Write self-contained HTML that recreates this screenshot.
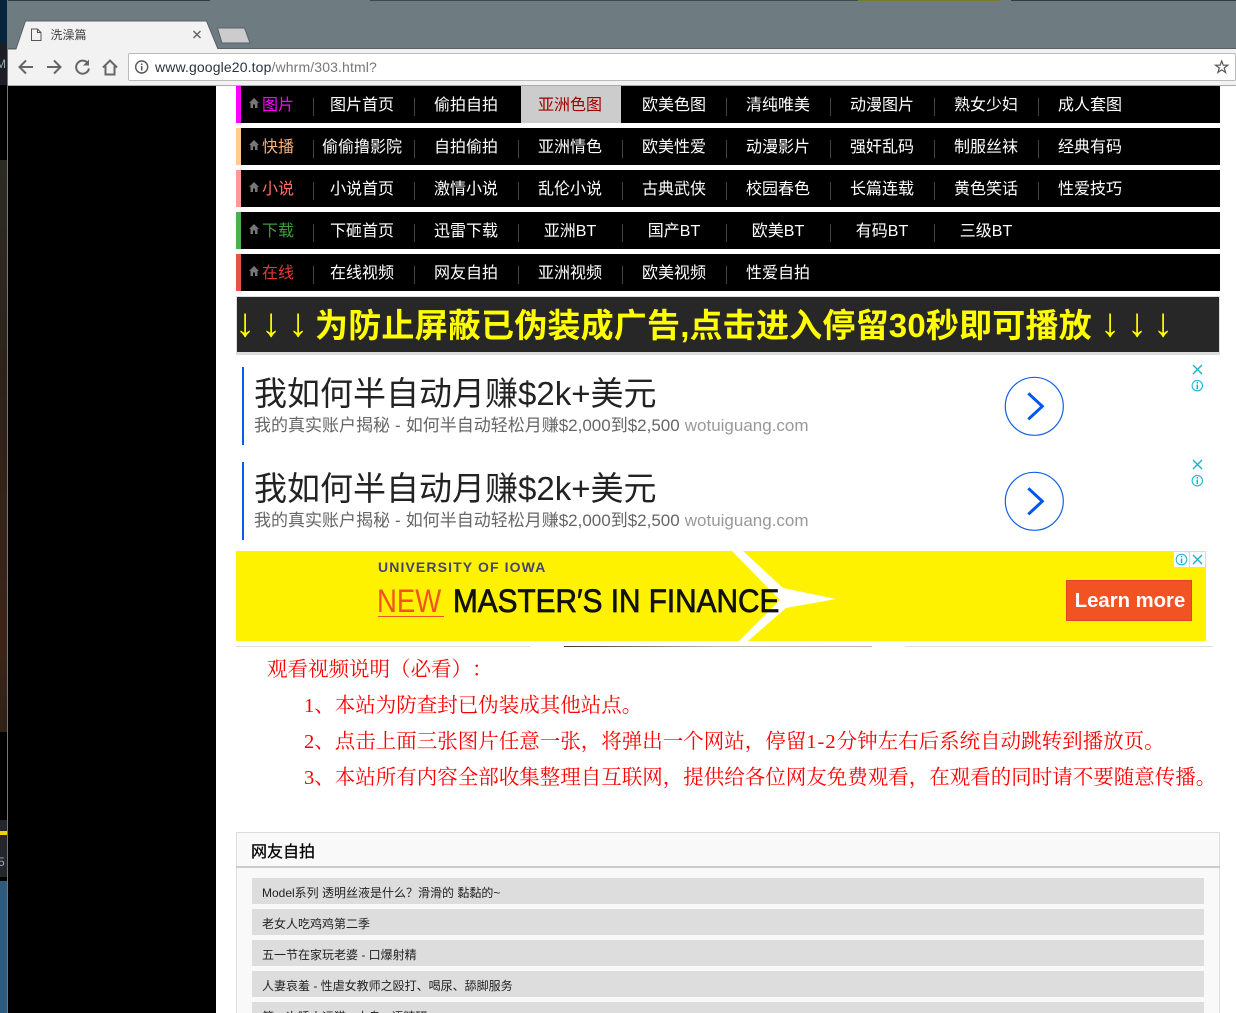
<!DOCTYPE html>
<html lang="zh"><head><meta charset="utf-8"><title>洗澡篇</title>
<style>
html{margin:0;padding:0;background:#fff;overflow:hidden;width:1236px;height:1013px}
body{margin:0;padding:0;background:#fff;position:relative;width:1236px;height:1013px;overflow:hidden;font-family:"Liberation Sans","Noto Sans CJK SC",sans-serif;text-spacing-trim:space-all}
.a,.r a,.r b,.r s,.r i,.r svg{position:absolute;white-space:nowrap;display:block;text-decoration:none}
.r{position:absolute;left:236px;width:984px;height:37px;background:#000}
.r i{left:0;top:0;width:5px;height:37px}
.r svg{left:13px;top:12px}
.r b{left:26px;top:0;font-weight:400;font-size:16px;line-height:39px}
.r a{top:0;width:104px;text-align:center;color:#fff;font-size:16px;line-height:39px}
.r s{top:12px;width:1px;height:18px;background:#444}
.it{position:absolute;left:252px;width:952px;height:26px;overflow:hidden;background:#ddd;color:#222;font-size:12px;line-height:31px;text-indent:10px;white-space:nowrap}
.red{position:absolute;white-space:nowrap;color:#f00;font-family:"Liberation Serif","Noto Serif CJK SC",serif;font-size:20.500px;line-height:30px;filter:blur(.25px)}
.ar{position:absolute;top:296px;width:26px;text-align:center;color:#ff0;font-size:40px;font-weight:700;line-height:55px;font-family:"Liberation Sans",sans-serif}
</style></head><body>

<!-- desktop strip -->
<div class="a" style="left:0;top:0;width:7px;height:43px;background:#06253f"></div>
<div class="a" style="left:0;top:43px;width:7px;height:42px;background:#1c1f26"></div>
<div class="a" style="left:0;top:85px;width:7px;height:75px;background:#000"></div>
<div class="a" style="left:0;top:160px;width:7px;height:572px;background:linear-gradient(#2c2a25,#2d2219 40%,#3b2417 85%,#2e2217)"></div>
<div class="a" style="left:0;top:732px;width:7px;height:88px;background:#000"></div>
<div class="a" style="left:0;top:820px;width:7px;height:61px;background:#25252c"></div>
<div class="a" style="left:0;top:831px;width:7px;height:4px;background:#f0d000"></div>
<div class="a" style="left:0;top:877px;width:7px;height:4px;background:#000"></div>
<div class="a" style="left:0;top:881px;width:7px;height:132px;background:#2e5a7e"></div>
<div class="a" style="left:-4px;top:57px;width:11px;overflow:hidden;color:#9ab;font-size:12px;line-height:14px">MI</div>
<div class="a" style="left:-2px;top:855px;width:9px;overflow:hidden;color:#9ab;font-size:12px;line-height:14px">5</div>
<div class="a" style="left:7px;top:0;width:1px;height:1013px;background:#777"></div>

<!-- page black side -->
<div class="a" style="left:8px;top:86px;width:208px;height:927px;background:#000"></div>

<!-- browser -->
<div class="a" style="left:8px;top:0;width:1228px;height:48px;background:#6e7c81"></div>
<div class="a" style="left:8px;top:0;width:202px;height:1px;background:#2c3c44"></div>
<div class="a" style="left:370px;top:0;width:488px;height:1px;background:#3a4a52"></div>
<div class="a" style="left:858px;top:0;width:142px;height:1px;background:#7a7a2a"></div>
<div class="a" style="left:1011px;top:0;width:225px;height:1px;background:#2c3c44"></div>
<div class="a" style="left:8px;top:48px;width:1228px;height:37px;background:#f2f2f2"></div>
<div class="a" style="left:8px;top:85px;width:1228px;height:1px;background:#aaa"></div>
<div class="a" style="left:8px;top:48px;width:1228px;height:1px;background:#566268"></div>
<svg class="a" style="left:8px;top:18px" width="244" height="32" viewBox="8 18 244 32">
<path d="M8 49H16L25.500 21H206.500L218 49" fill="#f2f2f2" stroke="#566268" stroke-width="1"/>
<rect x="17" y="48.500" width="200" height="1.500" fill="#f2f2f2"/>
<path d="M217.500 28H244.500L250 43H222Z" fill="#ccc" stroke="#566268" stroke-width="1"/>
<path d="M31.500 29H37.500L41 32.500V40.500H31.500Z M37.500 29V32.500H41" fill="none" stroke="#555" stroke-width="1"/>
<path d="M193.500 31L200.500 38M200.500 31L193.500 38" stroke="#666" stroke-width="1.500"/>
</svg>
<div class="a" style="left:50.500px;top:27px;font-size:12px;line-height:16px;color:#444">洗澡篇</div>
<svg class="a" style="left:16px;top:55px" width="106" height="24" viewBox="16 55 106 24" fill="none" stroke="#666" stroke-width="2">
<path d="M33 67H20M26 60.500L19.500 67L26 73.500"/>
<path d="M47 67H60M54 60.500L60.500 67L54 73.500"/>
<path d="M88 63.500A6.500 6.500 0 1 0 89 68.500" stroke-width="2"/><path d="M89 59.500V65.500H83Z" fill="#666" stroke="none"/>
<path d="M103 67.500L110 60.500L117 67.500M105.500 66V74.500H114.500V66" stroke-width="2"/>
</svg>
<div class="a" style="left:128px;top:53px;width:1106px;height:26px;background:#fff;border:1px solid #bbb;border-radius:2px"></div>
<svg class="a" style="left:134px;top:59px" width="16" height="16" viewBox="0 0 16 16"><circle cx="7.700" cy="8" r="6" fill="none" stroke="#555" stroke-width="1.400"/><path d="M7.700 7V11.500M7.700 4.500V6" stroke="#555" stroke-width="1.500"/></svg>
<div class="a" style="left:155px;top:59px;font-size:14px;line-height:16px;letter-spacing:.13px;color:#2a3340">www.google20.top<span style="color:#777">/whrm/303.html?</span></div>
<svg class="a" style="left:1214px;top:59px" width="16" height="16" viewBox="0 0 16 16"><path d="M7.700 2L9.300 6.200H13.800L10.200 9L11.600 13.500L7.700 10.800L3.900 13.500L5.300 9L1.600 6.200H6.100Z" fill="none" stroke="#555" stroke-width="1.200"/></svg>

<!-- nav rows -->
<div class="r" style="top:86px"><i style="background:#f0f"></i><svg width="10" height="10" viewBox="0 0 10 10"><path d="M5 0L10 5H8.500V10H6V6.500H4V10H1.500V5H0Z" fill="#777"/></svg><b style="color:#f0f">图片</b>
<div class="a" style="left:285px;top:0;width:100px;height:37px;background:#ccc"></div>
<s style="left:77px"></s><s style="left:178px"></s><s style="left:490px"></s><s style="left:594px"></s><s style="left:698px"></s><s style="left:802px"></s>
<a style="left:74px">图片首页</a><a style="left:178px">偷拍自拍</a><a style="left:282px;color:#a00000">亚洲色图</a><a style="left:386px">欧美色图</a><a style="left:490px">清纯唯美</a><a style="left:594px">动漫图片</a><a style="left:698px">熟女少妇</a><a style="left:802px">成人套图</a></div>

<div class="r" style="top:128px"><i style="background:#ffcc8f"></i><svg width="10" height="10" viewBox="0 0 10 10"><path d="M5 0L10 5H8.500V10H6V6.500H4V10H1.500V5H0Z" fill="#777"/></svg><b style="color:#f4b07a">快播</b>
<s style="left:77px"></s><s style="left:178px"></s><s style="left:282px"></s><s style="left:386px"></s><s style="left:490px"></s><s style="left:594px"></s><s style="left:698px"></s><s style="left:802px"></s>
<a style="left:74px">偷偷撸影院</a><a style="left:178px">自拍偷拍</a><a style="left:282px">亚洲情色</a><a style="left:386px">欧美性爱</a><a style="left:490px">动漫影片</a><a style="left:594px">强奸乱码</a><a style="left:698px">制服丝袜</a><a style="left:802px">经典有码</a></div>

<div class="r" style="top:170px"><i style="background:#ff9999"></i><svg width="10" height="10" viewBox="0 0 10 10"><path d="M5 0L10 5H8.500V10H6V6.500H4V10H1.500V5H0Z" fill="#777"/></svg><b style="color:#ff6f61">小说</b>
<s style="left:77px"></s><s style="left:178px"></s><s style="left:282px"></s><s style="left:386px"></s><s style="left:490px"></s><s style="left:594px"></s><s style="left:698px"></s><s style="left:802px"></s>
<a style="left:74px">小说首页</a><a style="left:178px">激情小说</a><a style="left:282px">乱伦小说</a><a style="left:386px">古典武侠</a><a style="left:490px">校园春色</a><a style="left:594px">长篇连载</a><a style="left:698px">黄色笑话</a><a style="left:802px">性爱技巧</a></div>

<div class="r" style="top:212px"><i style="background:#4caf50"></i><svg width="10" height="10" viewBox="0 0 10 10"><path d="M5 0L10 5H8.500V10H6V6.500H4V10H1.500V5H0Z" fill="#777"/></svg><b style="color:#3d9b40">下载</b>
<s style="left:77px"></s><s style="left:178px"></s><s style="left:282px"></s><s style="left:386px"></s><s style="left:490px"></s><s style="left:594px"></s><s style="left:698px"></s>
<a style="left:74px">下砸首页</a><a style="left:178px">迅雷下载</a><a style="left:282px">亚洲BT</a><a style="left:386px">国产BT</a><a style="left:490px">欧美BT</a><a style="left:594px">有码BT</a><a style="left:698px">三级BT</a></div>

<div class="r" style="top:254px"><i style="background:#e5534b"></i><svg width="10" height="10" viewBox="0 0 10 10"><path d="M5 0L10 5H8.500V10H6V6.500H4V10H1.500V5H0Z" fill="#777"/></svg><b style="color:#e53935">在线</b>
<s style="left:77px"></s><s style="left:178px"></s><s style="left:282px"></s><s style="left:386px"></s><s style="left:490px"></s>
<a style="left:74px">在线视频</a><a style="left:178px">网友自拍</a><a style="left:282px">亚洲视频</a><a style="left:386px">欧美视频</a><a style="left:490px">性爱自拍</a></div>

<!-- notice banner -->
<div class="a" style="left:236px;top:296px;width:982px;height:56px;background:#272727;border:1px solid #ddd;border-bottom:0"></div>
<div class="a" style="left:236px;top:352px;width:984px;height:3px;background:#ddd"></div>
<div class="ar" style="left:232px">↓</div><div class="ar" style="left:258px">↓</div><div class="ar" style="left:285px">↓</div>
<div class="a" style="left:315px;top:298px;color:#ff0;font-weight:700;font-size:33px;line-height:55px;letter-spacing:.2px">为防止屏蔽已伪装成广告,点击进入停留30秒即可播放</div>
<div class="ar" style="left:1097px">↓</div><div class="ar" style="left:1124px">↓</div><div class="ar" style="left:1150px">↓</div>

<!-- text ads -->
<div class="a" style="left:242px;top:367px;width:2px;height:78px;background:#0d5cf0"></div>
<div class="a" style="left:254px;top:372px;font-size:33px;line-height:44px;color:#222">我如何半自动月赚$2k+美元</div>
<div class="a" style="left:254px;top:415px;font-size:17px;line-height:22px;word-spacing:.3px;color:#666">我的真实账户揭秘 - 如何半自动轻松月赚$2,000到$2,500 <span style="color:#999">wotuiguang.com</span></div>
<svg class="a" style="left:1000px;top:372px" width="210" height="70" viewBox="1000 372 210 70"><circle cx="1034.300" cy="406.300" r="29" fill="none" stroke="#1560e8" stroke-width="1.200"/><path d="M1028.300 393.300L1042.300 406.300L1028.300 419.300" fill="none" stroke="#0055f5" stroke-width="3"/></svg>
<svg class="a" style="left:1190px;top:362px" width="15" height="31" viewBox="0 0 15 31" fill="none" stroke="#12b0d0"><path d="M3 3L12 12M12 3L3 12" stroke-width="1.300"/><circle cx="7.300" cy="23.700" r="5.200"/><path d="M7.300 22.500V27M7.300 20V21.500" stroke-width="1.500"/></svg>

<div class="a" style="left:242px;top:462px;width:2px;height:78px;background:#0d5cf0"></div>
<div class="a" style="left:254px;top:467px;font-size:33px;line-height:44px;color:#222">我如何半自动月赚$2k+美元</div>
<div class="a" style="left:254px;top:510px;font-size:17px;line-height:22px;word-spacing:.3px;color:#666">我的真实账户揭秘 - 如何半自动轻松月赚$2,000到$2,500 <span style="color:#999">wotuiguang.com</span></div>
<svg class="a" style="left:1000px;top:467px" width="210" height="70" viewBox="1000 372 210 70"><circle cx="1034.300" cy="406.300" r="29" fill="none" stroke="#1560e8" stroke-width="1.200"/><path d="M1028.300 393.300L1042.300 406.300L1028.300 419.300" fill="none" stroke="#0055f5" stroke-width="3"/></svg>
<svg class="a" style="left:1190px;top:457px" width="15" height="31" viewBox="0 0 15 31" fill="none" stroke="#12b0d0"><path d="M3 3L12 12M12 3L3 12" stroke-width="1.300"/><circle cx="7.300" cy="23.700" r="5.200"/><path d="M7.300 22.500V27M7.300 20V21.500" stroke-width="1.500"/></svg>

<!-- yellow banner -->
<div class="a" style="left:236px;top:551px;width:970px;height:90px;background:#fff200"></div>
<svg class="a" style="left:730px;top:551px" width="110" height="90" viewBox="730 551 110 90"><path d="M732 551H743L783 588L836 599L786 608L748 641H739L780 600Z" fill="#fff"/></svg>
<div class="a" style="left:378px;top:558px;font-size:14px;line-height:18px;font-weight:700;letter-spacing:1.120px;color:#45456b">UNIVERSITY OF IOWA</div>
<div class="a" style="left:377px;top:583px;font-size:32px;line-height:36px;color:#f15322;transform:scaleX(.86);transform-origin:0 0">NEW</div>
<div class="a" style="left:378px;top:616px;width:66px;height:1px;background:#f15322"></div>
<div class="a" style="left:453px;top:583px;font-size:32px;line-height:36px;color:#111;-webkit-text-stroke:.7px #111;transform:scaleX(.93);transform-origin:0 0">MASTER′S IN FINANCE</div>
<div class="a" style="left:1066px;top:580px;width:124px;height:39px;background:#f15322;border:1px solid #e8402a;color:#fff;font-weight:700;font-size:20.300px;line-height:41px;text-align:center;text-indent:2px">Learn more</div>
<svg class="a" style="left:1174px;top:552px" width="31" height="15" viewBox="0 0 31 15"><rect width="15" height="15" fill="#fff"/><rect x="16" width="15" height="15" fill="#fff"/><g fill="none" stroke="#12b0d0"><circle cx="7.500" cy="7.500" r="5.300"/><path d="M7.500 6.500V11M7.500 3.800V5.300" stroke-width="1.500"/><path d="M19 3L28 12M28 3L19 12" stroke-width="1.300"/></g></svg>

<div class="a" style="left:236px;top:646px;width:294px;height:1px;background:#ddd"></div>
<div class="a" style="left:564px;top:646px;width:308px;height:1px;background:linear-gradient(90deg,#443322,#bba,#c8b0b0)"></div>
<div class="a" style="left:905px;top:646px;width:308px;height:1px;background:#ddd"></div>

<!-- red text -->
<div class="red" style="left:267px;top:655px">观看视频说明（必看）：</div>
<div class="red" style="left:304px;top:691px">1、本站为防查封已伪装成其他站点。</div>
<div class="red" style="left:304px;top:727px">2、点击上面三张图片任意一张，将弹出一个网站，停留<span style="letter-spacing:1px">1-2</span>分钟左右后系统自动跳转到播放页。</div>
<div class="red" style="left:304px;top:763px">3、本站所有内容全部收集整理自互联网，提供给各位网友免费观看，在观看的同时请不要随意传播。</div>

<!-- list -->
<div class="a" style="left:236px;top:832px;width:982px;height:190px;background:#f9f9f9;border:1px solid #ddd"></div>
<div class="a" style="left:236px;top:866px;width:984px;height:2px;background:#ccc"></div>
<div class="a" style="left:251px;top:841px;font-size:16px;line-height:23px;color:#000;-webkit-text-stroke:.25px #000">网友自拍</div>
<div class="it" style="top:878px">Model系列 透明丝液是什么？滑滑的 黏黏的~</div>
<div class="it" style="top:909px">老女人吃鸡鸡第二季</div>
<div class="it" style="top:940px">五一节在家玩老婆 - 口爆射精</div>
<div class="it" style="top:971px">人妻哀羞 - 性虐女教师之殴打、喝尿、舔脚服务</div>
<div class="it" style="top:1002px;height:11px">第一次睡人运猫 - 大鸟 - 语精研</div>

</body></html>
